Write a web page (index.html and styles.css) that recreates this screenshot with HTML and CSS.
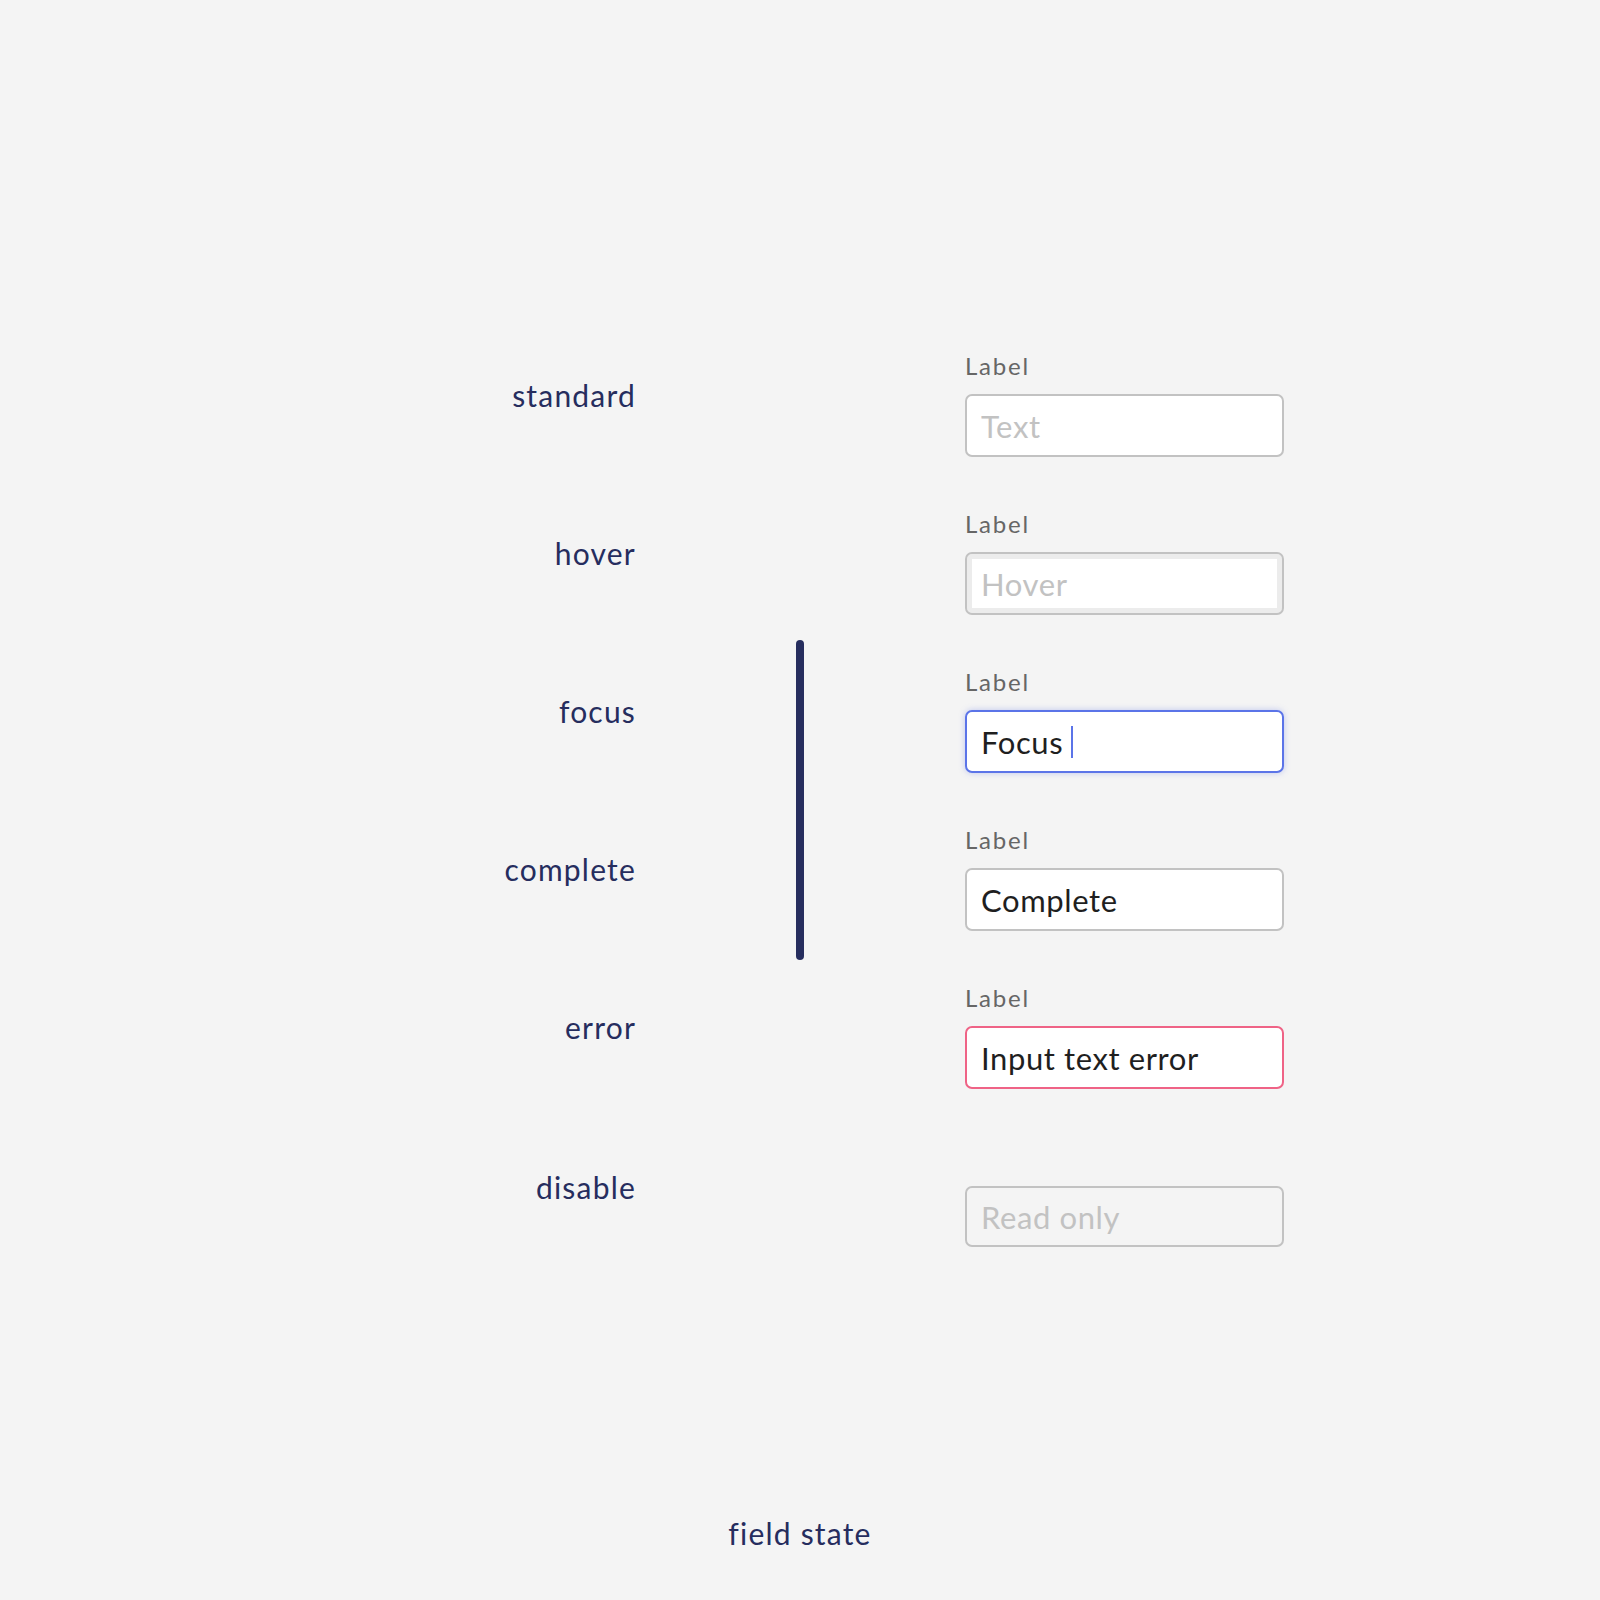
FILE: index.html
```html
<!DOCTYPE html>
<html lang="en">
<head>
<meta charset="utf-8">
<title>Field state</title>
<link rel="stylesheet" href="styles.css">
</head>
<body>
<main class="page">
  <section class="states">
    <div class="state-name">standard</div>
    <div class="field">
      <div class="field-label">Label</div>
      <div class="box"><span class="placeholder">Text</span></div>
    </div>

    <div class="state-name">hover</div>
    <div class="field">
      <div class="field-label">Label</div>
      <div class="box box-hover"><span class="placeholder">Hover</span></div>
    </div>

    <div class="state-name">focus</div>
    <div class="field">
      <div class="field-label">Label</div>
      <div class="box box-focus"><span class="value">Focus</span><span class="caret"></span></div>
    </div>

    <div class="state-name">complete</div>
    <div class="field">
      <div class="field-label">Label</div>
      <div class="box"><span class="value">Complete</span></div>
    </div>

    <div class="state-name">error</div>
    <div class="field">
      <div class="field-label">Label</div>
      <div class="box box-error"><span class="value">Input text error</span></div>
    </div>

    <div class="state-name state-name-last">disable</div>
    <div class="field field-last">
      <div class="field-label is-hidden">Label</div>
      <div class="box box-disabled"><span class="placeholder">Read only</span></div>
    </div>

    <div class="bar"></div>
  </section>
  <p class="caption">field state</p>
</main>
</body>
</html>
```

FILE: styles.css
```css
* { box-sizing: border-box; }

html, body {
  margin: 0;
  padding: 0;
}

body {
  background: #f4f4f4;
  font-family: "Lato", "Noto Sans", sans-serif;
  color: #262d5e;
  width: 1600px;
  min-height: 1600px;
}

.page {
  padding-top: 352px;
}

.states {
  display: grid;
  grid-template-columns: 636px 329px 320px;
  grid-template-rows: repeat(6, 105px);
  row-gap: 53px;
}

.state-name {
  grid-column: 1;
  text-align: right;
  font-size: 30px;
  line-height: 36px;
  letter-spacing: 1.2px;
  color: #262d5e;
  margin-top: 25px;
}

.field {
  grid-column: 3;
  display: flex;
  flex-direction: column;
}

.state-name-last {
  margin-top: 27px;
}

.field-last {
  margin-top: 2px;
}

.field-label {
  font-size: 24px;
  line-height: 28px;
  letter-spacing: 1.8px;
  color: #666666;
  margin-bottom: 14px;
}

.is-hidden {
  visibility: hidden;
}

.box {
  height: 63px;
  width: 319px;
  border: 2px solid #c2c2c2;
  border-radius: 7px;
  background: #ffffff;
  display: flex;
  align-items: center;
  padding-left: 14px;
  font-size: 31px;
  letter-spacing: 0.6px;
}

.box-hover {
  box-shadow: inset 0 0 0 5px #ececec;
}

.box-focus {
  border-color: #5b74e8;
  box-shadow: 0 0 6px rgba(91, 116, 232, 0.35);
}

.box-error {
  border-color: #ef6386;
}

.box-disabled {
  background: #f4f4f4;
}

.placeholder {
  color: #c2c2c2;
}

.value {
  color: #1f1f1f;
}

.caret {
  display: inline-block;
  width: 2px;
  height: 32px;
  margin-left: 8px;
  background: #5b74e8;
}

.bar {
  grid-column: 2;
  grid-row: 3 / span 2;
  justify-self: start;
  align-self: stretch;
  width: 8px;
  margin: -28px 0 -29px 160px;
  border-radius: 4px;
  background: #262d5e;
}

.caption {
  margin: 268px 0 0;
  text-align: center;
  font-size: 30px;
  line-height: 36px;
  letter-spacing: 1.2px;
  color: #262d5e;
}
```
